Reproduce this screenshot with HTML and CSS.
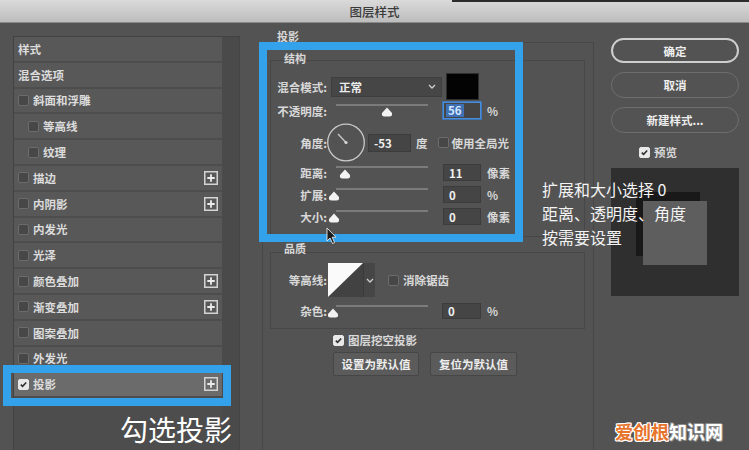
FILE: index.html
```html
<!DOCTYPE html>
<html lang="zh-CN">
<head>
<meta charset="utf-8">
<title>图层样式</title>
<link rel="stylesheet" href="styles.css">
</head>
<body>
<div class="titlebar"><span>图层样式</span></div>
<div class="layout">
  <aside class="styles-panel">
    <div class="styles-list">
      <div class="row"><span>样式</span></div>
      <div class="row"><span>混合选项</span></div>
      <div class="row"><i class="cb"></i><span>斜面和浮雕</span></div>
      <div class="row indent"><i class="cb"></i><span>等高线</span></div>
      <div class="row indent"><i class="cb"></i><span>纹理</span></div>
      <div class="row"><i class="cb"></i><span>描边</span><svg class="plus" viewBox="0 0 14 14"><rect x="0.75" y="0.75" width="12.5" height="12.5" fill="none" stroke="#d4d4d4" stroke-width="1.5"/><path d="M7 3.3v7.4M3.3 7h7.4" stroke="#ececec" stroke-width="1.8"/></svg></div>
      <div class="row"><i class="cb"></i><span>内阴影</span><svg class="plus" viewBox="0 0 14 14"><rect x="0.75" y="0.75" width="12.5" height="12.5" fill="none" stroke="#d4d4d4" stroke-width="1.5"/><path d="M7 3.3v7.4M3.3 7h7.4" stroke="#ececec" stroke-width="1.8"/></svg></div>
      <div class="row"><i class="cb"></i><span>内发光</span></div>
      <div class="row"><i class="cb"></i><span>光泽</span></div>
      <div class="row"><i class="cb"></i><span>颜色叠加</span><svg class="plus" viewBox="0 0 14 14"><rect x="0.75" y="0.75" width="12.5" height="12.5" fill="none" stroke="#d4d4d4" stroke-width="1.5"/><path d="M7 3.3v7.4M3.3 7h7.4" stroke="#ececec" stroke-width="1.8"/></svg></div>
      <div class="row"><i class="cb"></i><span>渐变叠加</span><svg class="plus" viewBox="0 0 14 14"><rect x="0.75" y="0.75" width="12.5" height="12.5" fill="none" stroke="#d4d4d4" stroke-width="1.5"/><path d="M7 3.3v7.4M3.3 7h7.4" stroke="#ececec" stroke-width="1.8"/></svg></div>
      <div class="row"><i class="cb"></i><span>图案叠加</span></div>
      <div class="row"><i class="cb"></i><span>外发光</span></div>
      <div class="row selected"><i class="cb on"><svg viewBox="0 0 11 11"><path d="M2.2 5.6l2.2 2.2 4.4-4.7" fill="none" stroke="#2e2e2e" stroke-width="1.9"/></svg></i><span>投影</span><svg class="plus" viewBox="0 0 14 14"><rect x="0.75" y="0.75" width="12.5" height="12.5" fill="none" stroke="#d4d4d4" stroke-width="1.5"/><path d="M7 3.3v7.4M3.3 7h7.4" stroke="#ececec" stroke-width="1.8"/></svg></div>
    </div>
    <div class="scroll"></div>
  </aside>

  <main class="center">
    <div class="group-title">投影</div>
    <div class="outer">
      <div class="sub-title">结构</div>
      <div class="inner structure">
        <div class="frow r-mode">
          <span class="label">混合模式:</span>
          <div class="select"><span>正常</span><svg class="chev" viewBox="0 0 8 5"><path d="M1 1l3 3 3-3" fill="none" stroke="#cfcfcf" stroke-width="1.3"/></svg></div>
          <div class="swatch"></div>
        </div>
        <div class="frow r-17 first">
          <span class="label">不透明度:</span>
          <div class="slider"><div class="track"></div><svg class="thumb" style="left:51px" viewBox="0 0 12 10"><path d="M6 0.5L11 6Q11.6 9.5 8.5 9.5H3.5Q0.4 9.5 1 6Z" fill="#f3f3f3"/></svg></div>
          <div class="num focus"><span class="sel">56</span></div>
          <span class="unit">%</span>
        </div>
        <div class="frow r-angle">
          <span class="label">角度:</span>
          <svg class="dial" viewBox="0 0 39 39"><circle cx="19" cy="19.5" r="18.3" fill="none" stroke="#c9c9c9" stroke-width="1.3"/><path d="M19 19.5L11 11" stroke="#c9c9c9" stroke-width="1.3"/><circle cx="19" cy="19.5" r="1.6" fill="#d6d6d6"/></svg>
          <div class="num angle">-53</div>
          <span class="deg">度</span>
          <i class="cb gl"></i>
          <span class="cb-text">使用全局光</span>
        </div>
        <div class="frow r-17 r-dist">
          <span class="label">距离:</span>
          <div class="slider"><div class="track"></div><svg class="thumb" style="left:9px" viewBox="0 0 12 10"><path d="M6 0.5L11 6Q11.6 9.5 8.5 9.5H3.5Q0.4 9.5 1 6Z" fill="#f3f3f3"/></svg></div>
          <div class="num">11</div>
          <span class="unit">像素</span>
        </div>
        <div class="frow r-17 r-gap">
          <span class="label">扩展:</span>
          <div class="slider"><div class="track"></div><svg class="thumb" style="left:-2px" viewBox="0 0 12 10"><path d="M6 0.5L11 6Q11.6 9.5 8.5 9.5H3.5Q0.4 9.5 1 6Z" fill="#f3f3f3"/></svg></div>
          <div class="num">0</div>
          <span class="unit">%</span>
        </div>
        <div class="frow r-17 r-gap">
          <span class="label">大小:</span>
          <div class="slider"><div class="track"></div><svg class="thumb" style="left:-2px" viewBox="0 0 12 10"><path d="M6 0.5L11 6Q11.6 9.5 8.5 9.5H3.5Q0.4 9.5 1 6Z" fill="#f3f3f3"/></svg></div>
          <div class="num">0</div>
          <span class="unit">像素</span>
        </div>
      </div>

      <div class="sub-title q-title">品质</div>
      <div class="inner quality">
        <div class="frow r-contour">
          <span class="label">等高线:</span>
          <svg class="contour" viewBox="0 0 35 34"><rect width="35" height="34" fill="#424242"/><path d="M0 0H35L0 34Z" fill="#fafafa"/></svg>
          <div class="contour-drop"><svg class="chev" viewBox="0 0 8 5"><path d="M1 1l3 3 3-3" fill="none" stroke="#cfcfcf" stroke-width="1.3"/></svg></div>
          <i class="cb aa"></i>
          <span class="cb-text">消除锯齿</span>
        </div>
        <div class="frow r-noise">
          <span class="label">杂色:</span>
          <div class="slider"><div class="track"></div><svg class="thumb" style="left:-3px" viewBox="0 0 12 10"><path d="M6 0.5L11 6Q11.6 9.5 8.5 9.5H3.5Q0.4 9.5 1 6Z" fill="#f3f3f3"/></svg></div>
          <div class="num noise">0</div>
          <span class="unit">%</span>
        </div>
      </div>

      <div class="knock">
        <i class="cb on"><svg viewBox="0 0 11 11"><path d="M2.2 5.6l2.2 2.2 4.4-4.7" fill="none" stroke="#2e2e2e" stroke-width="1.9"/></svg></i>
        <span class="cb-text">图层挖空投影</span>
      </div>
      <div class="defaults">
        <div class="btn-sq b1">设置为默认值</div>
        <div class="btn-sq b2">复位为默认值</div>
      </div>
    </div>
  </main>

  <aside class="actions">
    <div class="btn-round primary">确定</div>
    <div class="btn-round secondary">取消</div>
    <div class="btn-round secondary">新建样式...</div>
    <div class="preview-row">
      <i class="cb on"><svg viewBox="0 0 11 11"><path d="M2.2 5.6l2.2 2.2 4.4-4.7" fill="none" stroke="#2e2e2e" stroke-width="1.9"/></svg></i>
      <span class="cb-text">预览</span>
    </div>
    <div class="preview-box"><div class="preview-layer"></div></div>
  </aside>
</div>

<div class="hl hl-left"></div>
<div class="hl hl-center"></div>
<svg class="cursor" viewBox="0 0 11 18"><path d="M1 1V14L4 11L6.5 16.5L8.6 15.6L6.2 10.2H10Z" fill="#1c1c1c" stroke="#e8e8e8" stroke-width="0.9"/></svg>
<div class="caption">勾选投影</div>
<div class="note">扩展和大小选择 0<br>距离、透明度、角度<br>按需要设置</div>
<div class="wm"><span class="a">爱创根</span><span class="b">知识网</span></div>
</body>
</html>
```

FILE: styles.css
```css
* { box-sizing: border-box; margin: 0; padding: 0; }
html, body { width: 749px; height: 450px; overflow: hidden; }
body {
  background: #535353;
  font-family: "Noto Sans CJK SC", "Noto Sans", sans-serif;
  color: #d8d8d8;
  font-size: 11.5px;
  font-weight: 700;
  position: relative;
}

.titlebar {
  height: 23px;
  background: linear-gradient(#dadada, #bdbdbd);
  border-bottom: 1px solid #8a8a8a;
  display: flex;
  align-items: center;
  justify-content: center;
  color: #3a3a3a;
  font-size: 12.5px;
  font-weight: 500;
  position: relative;
}
.titlebar::before {
  content: "";
  position: absolute;
  left: 452px; right: 0; top: 0;
  height: 2px;
  background: #2c2c2c;
}

.layout { display: flex; height: 427px; }

/* left styles list */
.styles-panel { width: 240px; flex: none; padding: 13px 0 0 13px; display: flex; }
.styles-list {
  width: 209px;
  background: #4d4d4d;
  border-top: 1px solid #424242;
  border-left: 1px solid #424242;
}
.scroll {
  width: 18px;
  background: #4a4a4a;
  border-top: 1px solid #424242;
  border-right: 1px solid #444;
}
.row {
  height: 23.8px;
  margin-bottom: 2px;
  background: #585858;
  display: flex;
  align-items: center;
  padding-left: 4px;
  color: #dcdcdc;
}
.row.indent { padding-left: 14px; }
.row.selected { background: #6b6b6b; }
.row .cb { margin-right: 4px; }
.plus { width: 14px; height: 14px; margin-left: auto; margin-right: 4px; flex: none; }

.cb {
  display: block;
  width: 11px; height: 11px;
  flex: none;
  border: 1px solid #6c6c6c;
  background: #474747;
  border-radius: 2px;
}
.cb.on { background: #e8e8e8; border-color: #e8e8e8; }
.cb svg { display: block; width: 9px; height: 9px; }

/* center */
.center { width: 357px; flex: none; padding: 8px 0 0 22px; overflow: hidden; }
.group-title { height: 11px; line-height: 11px; padding-left: 15px; font-size: 11px; }
.outer {
  width: 332px;
  height: 420px;
  border: 1px solid #474747;
  border-bottom: none;
  padding: 9px 8px 0 7px;
}
.sub-title { height: 12px; line-height: 12px; padding-left: 14px; font-size: 11px; }
.q-title { margin-top: 5px; }
.inner { border: 1px solid #474747; }
.structure { margin-top: -4px; padding: 12px 0 11px 0; }
.quality { margin-top: -2px; padding: 10px 0 9px 0; }

.frow { display: flex; align-items: center; }
.label { width: 56px; flex: none; text-align: right; white-space: nowrap; }
.r-mode { height: 27px; }
.r-17 { height: 17px; }
.r-17.first { margin-top: 2px; }
.r-dist { margin-top: 2px; }
.r-gap { margin-top: 5px; }
.r-angle { height: 39px; margin-top: 4px; }
.r-contour { height: 34px; }
.r-noise { height: 16px; margin-top: 6px; }

.select {
  margin-left: 4px;
  width: 111px; height: 20px;
  background: #464646;
  border: 1px solid #3e3e3e;
  display: flex; align-items: center;
  padding: 0 5px 0 7px;
  color: #ececec;
}
.chev { width: 8px; height: 5px; display: block; }
.select .chev { margin-left: auto; }
.swatch {
  margin-left: 4px;
  width: 33px; height: 27px;
  background: #030303;
  border: 1px solid #2e2e2e;
}

.slider { margin-left: 9px; width: 92px; height: 17px; position: relative; flex: none; align-self: flex-start; }
.r-noise .slider { height: 16px; }
.track { margin-top: 2px; height: 2px; background: #7b7b7b; }
.thumb { position: absolute; top: 5px; width: 12px; height: 10px; margin-left: -6px; display: block; }

.num {
  margin-left: 15px;
  width: 38px; height: 17px;
  flex: none;
  background: #454545;
  border: 1px solid #3c3c3c;
  display: flex; align-items: center;
  padding-left: 5px;
  color: #f0f0f0;
}
.num.focus { border-color: #4d8fd6; box-shadow: 0 0 0 1px #3c74b8; padding-left: 2px; }
.num .sel { background: #3f70b4; color: #d6e8ff; padding: 0 2px; line-height: 13px; }
.num.angle { margin-left: 2px; width: 43px; height: 18px; }
.num.noise { margin-left: 14px; width: 39px; height: 16px; }
.unit { margin-left: 6px; white-space: nowrap; }

.dial { width: 39px; height: 39px; display: block; flex: none; }
.deg { margin-left: 5px; }
.cb.gl { margin-left: 10px; }
.cb-text { margin-left: 3px; white-space: nowrap; }

.contour { margin-left: 1px; width: 35px; height: 34px; display: block; flex: none; }
.contour-drop {
  width: 12px; height: 34px;
  background: #464646;
  border-left: 1px solid #3a3a3a;
  display: flex; align-items: center; justify-content: center;
}
.cb.aa { margin-left: 13px; }
.quality .cb-text { margin-left: 4px; }

.knock { margin-top: 5px; height: 12px; padding-left: 63px; display: flex; align-items: center; }
.knock .cb-text { margin-left: 4px; }
.defaults { margin-top: 6px; padding-left: 63px; display: flex; gap: 11px; }
.btn-sq {
  height: 24px;
  background: #5b5b5b;
  border: 1px solid #464646;
  border-radius: 2px;
  display: flex; align-items: center; justify-content: center;
  color: #ededed;
}
.b1 { width: 86px; }
.b2 { width: 87px; }

/* right */
.actions { width: 152px; flex: none; padding: 15px 0 0 14px; }
.btn-round {
  width: 128px; height: 25px;
  border-radius: 13px;
  display: flex; align-items: center; justify-content: center;
  color: #eeeeee;
}
.primary { border: 2px solid #cecece; }
.secondary { height: 26px; margin-top: 9px; border: 1.5px solid #6e6e6e; }
.preview-row { margin-top: 13px; height: 12px; padding-left: 28px; display: flex; align-items: center; }
.preview-row .cb-text { margin-left: 4px; }
.preview-box {
  margin-top: 10px;
  width: 128px; height: 128px;
  background: #2f2f2f;
  padding: 33px 0 0 32px;
}
.preview-layer {
  width: 64px; height: 64px;
  background: #5e5e5e;
  box-shadow: -7px -9px 0 0 #191919;
}

/* annotation overlays */
.hl { position: absolute; border: 8px solid #33a2ea; }
.hl-left { left: 3px; top: 365px; width: 228px; height: 41px; }
.hl-center { left: 259px; top: 42px; width: 264px; height: 200px; }
.cursor { position: absolute; left: 326px; top: 227px; width: 11px; height: 18px; }
.caption {
  position: absolute;
  left: 120px; top: 411px;
  font-size: 28px; line-height: 36px;
  font-weight: 400;
  color: #ffffff;
  white-space: nowrap;
}
.note {
  position: absolute;
  left: 542px; top: 177px;
  font-size: 16px; line-height: 24px;
  font-weight: 400;
  color: #f4f4f4;
  white-space: nowrap;
}
.wm {
  position: absolute;
  left: 615px; top: 419px;
  font-size: 18px; line-height: 24px;
  font-weight: 700;
  white-space: nowrap;
}
.wm .a {
  color: #e8742c;
  text-shadow: 1px 0 0 #fff, -1px 0 0 #fff, 0 1px 0 #fff, 0 -1px 0 #fff, 1px 1px 0 #fff, -1px -1px 0 #fff, 1px -1px 0 #fff, -1px 1px 0 #fff;
}
.wm .b {
  color: #ffffff;
  text-shadow: 1px 0 0 #8a8a8a, -1px 0 0 #8a8a8a, 0 1px 0 #8a8a8a, 0 -1px 0 #8a8a8a, 1px 1px 0 #8a8a8a, -1px -1px 0 #8a8a8a;
}
```
